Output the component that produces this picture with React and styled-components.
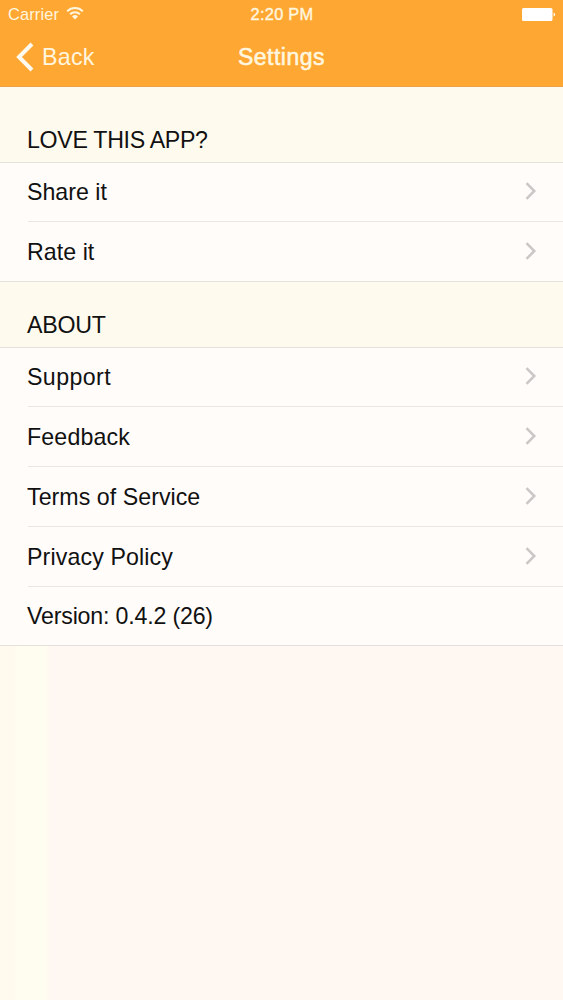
import React from "react";
import styled, { createGlobalStyle } from "styled-components";

const shareItems = [
    { label: "Share it", space: 0 },
    { label: "Rate it", space: 0.05 },
];
const aboutItems = [
    { label: "Support", space: 0.4 },
    { label: "Feedback", space: 0.15 },
    { label: "Terms of Service", space: 0.04 },
    { label: "Privacy Policy", space: 0.12 },
];

export default function App() {
    return (
        <Screen>
            <GlobalStyle />
            <TopBar>
                <StatusBar>
                    <Carrier>
                        <span>Carrier</span>
                        <WifiIcon />
                    </Carrier>
                    <Time>2:20 PM</Time>
                    <BatteryIcon />
                </StatusBar>
                <NavBar>
                    <BackButton>
                        <BackIcon />
                        <span>Back</span>
                    </BackButton>
                    <Title>Settings</Title>
                </NavBar>
            </TopBar>

            <SectionTitle $height={75} $space={-0.32}>LOVE THIS APP?</SectionTitle>
            <List>
                {shareItems.map((item) => (
                    <LinkRow key={item.label} item={item} />
                ))}
            </List>

            <SectionTitle $height={65} $space={-0.25}>ABOUT</SectionTitle>
            <List>
                {aboutItems.map((item) => (
                    <LinkRow key={item.label} item={item} />
                ))}
                <Row $height={59}>
                    <RowContent>
                        <Label $space={-0.19}>Version: 0.4.2 (26)</Label>
                    </RowContent>
                </Row>
            </List>
        </Screen>
    );
}

function LinkRow({ item }) {
    return (
        <Row>
            <RowContent>
                <Label $space={item.space}>{item.label}</Label>
                <Chevron />
            </RowContent>
        </Row>
    );
}

function WifiIcon() {
    return (
        <svg width="18" height="14" viewBox="0 0 18 14">
            <g fill="none" stroke="#fff6df" strokeWidth="2">
                <path d="M1.2 5.2a11.2 11.2 0 0 1 15.6 0" />
                <path d="M4.1 8.3a7 7 0 0 1 9.8 0" />
            </g>
            <path d="M9 13.4 6 10.4a4.3 4.3 0 0 1 6 0z" fill="#fff6df" />
        </svg>
    );
}

function BatteryIcon() {
    return (
        <svg width="34" height="13" viewBox="0 0 34 13">
            <rect x="0" y="0" width="30.5" height="13" rx="1.6" fill="#fff" />
            <path d="M31.6 4.6a2.1 2.1 0 0 1 0 4z" fill="#fff" />
        </svg>
    );
}

function BackIcon() {
    return (
        <svg width="18" height="30" viewBox="0 0 18 30">
            <path d="M16 2 3 15l13 13" fill="none" stroke="#fffaf0" strokeWidth="4" />
        </svg>
    );
}

function Chevron() {
    return (
        <svg width="12" height="18" viewBox="0 0 12 18">
            <path d="M1.5 1.2 9.3 9l-7.8 7.8" fill="none" stroke="#cac8c6" strokeWidth="2.5" />
        </svg>
    );
}

const GlobalStyle = createGlobalStyle`
    * {
        box-sizing: border-box;
    }
    body {
        margin: 0;
        font-family: "Liberation Sans", Arial, sans-serif;
    }
`
const Screen = styled.main`
    width: 100%;
    min-height: 1000px;
    background: linear-gradient(90deg, #fffaed 0, #fffaed 14px, #fffdf0 17px, #fffdf0 45px, #fff8f2 50px);
    color: #111;
    font-size: 23.2px;
`
const TopBar = styled.header`
    height: 87px;
    background-color: #ffa733;
    border-bottom: 1px solid #e9a346;
    color: #fff6df;
`
const StatusBar = styled.div`
    display: grid;
    grid-template-columns: 1fr auto 1fr;
    align-items: center;
    height: 28px;
    padding: 0 7px 0 8px;
    font-size: 16.4px;
    > svg {
        justify-self: end;
    }
`
const Carrier = styled.div`
    display: flex;
    align-items: center;
    gap: 7px;
    letter-spacing: 0.15px;
    svg {
        margin-top: -3px;
    }
`
const Time = styled.span`
    letter-spacing: 0.25px;
    -webkit-text-stroke: 0.4px #fff6df;
`
const NavBar = styled.nav`
    display: grid;
    grid-template-columns: 1fr auto 1fr;
    align-items: center;
    height: 58px;
    padding: 0 16px;
`
const BackButton = styled.div`
    display: flex;
    align-items: center;
    gap: 8px;
    letter-spacing: 0.3px;
`
const Title = styled.h1`
    margin: 0;
    font-size: 23px;
    font-weight: 400;
    letter-spacing: 0.5px;
    -webkit-text-stroke: 0.6px #fff6df;
`
const SectionTitle = styled.h2`
    display: flex;
    align-items: flex-end;
    height: ${(props) => props.$height}px;
    margin: 0;
    padding: 0 27px 8px;
    background-color: #fffaee;
    font-size: 23.2px;
    font-weight: 400;
    letter-spacing: ${(props) => props.$space}px;
`
const List = styled.ul`
    margin: 0;
    padding: 0;
    list-style: none;
    border-top: 1px solid #e3e1dc;
    border-bottom: 1px solid #e3e1dc;
    background-color: #fffcfa;
`
const Label = styled.span`
    margin-left: -1px;
    padding-top: 1px;
    letter-spacing: ${(props) => props.$space}px;
`
const RowContent = styled.div`
    display: flex;
    justify-content: space-between;
    align-items: center;
    height: 100%;
    padding-right: 26px;
    border-bottom: 1px solid #e9e7e4;
    svg {
        margin-bottom: 2px;
    }
`
const Row = styled.li`
    height: ${(props) => props.$height || 60}px;
    padding-left: 28px;
    &:first-child {
        height: 59px;
    }
    &:last-child {
        margin-bottom: -1px;
    }
    &:last-child ${RowContent} {
        border-color: transparent;
    }
`
